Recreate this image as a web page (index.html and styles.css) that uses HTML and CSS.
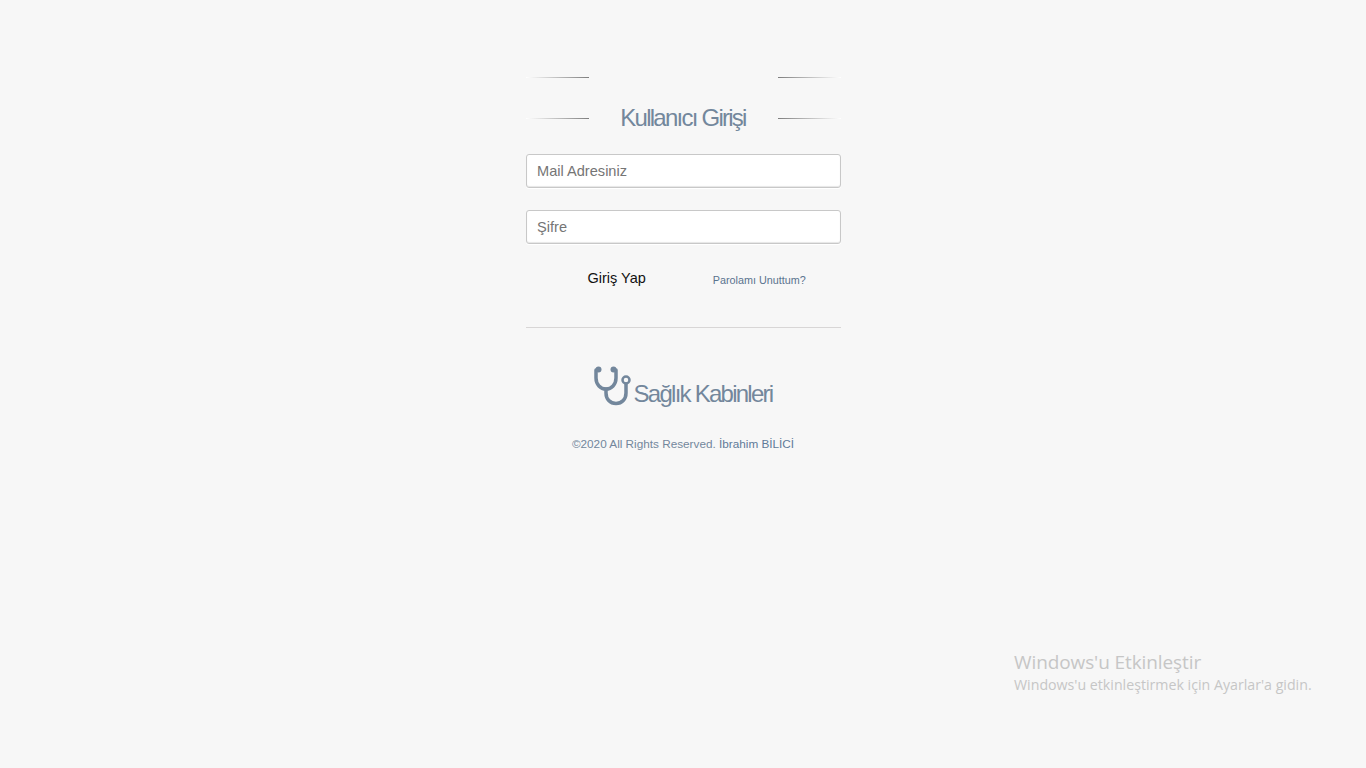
FILE: index.html
```html
<!DOCTYPE html>
<html lang="tr">
<head>
<meta charset="utf-8">
<title>Kullanıcı Girişi</title>
<link rel="stylesheet" href="styles.css">
</head>
<body>
<main class="login">
  <div class="title-row title-row-empty">
    <span class="rule rule-left"></span>
    <span class="rule rule-right"></span>
  </div>
  <div class="title-row">
    <span class="rule rule-left"></span>
    <h1 class="title">Kullanıcı Girişi</h1>
    <span class="rule rule-right"></span>
  </div>
  <form class="form">
    <input class="field" type="text" placeholder="Mail Adresiniz">
    <input class="field" type="password" placeholder="Şifre">
    <div class="actions">
      <a class="submit" href="#">Giriş Yap</a>
      <a class="lost" href="#">Parolamı Unuttum?</a>
    </div>
  </form>
  <div class="separator">
    <div class="brand">
      <svg class="brand-icon" width="38" height="41" viewBox="1 -1 38 41" fill="none" stroke="#73879c" stroke-width="3.500" stroke-linecap="round">
        <path d="M3 4V12C3 18.500 7.500 23 13 23C18.500 23 23 18.500 23 12V4"/>
        <path d="M13 23V27C13 33 17 37.500 23 37.500C29 37.500 33 33 33 27V18"/>
        <circle cx="5.500" cy="3.500" r="3" fill="#73879c" stroke="none"/>
        <circle cx="20.500" cy="3.500" r="3" fill="#73879c" stroke="none"/>
        <circle cx="33" cy="14" r="3.500" stroke-width="2.500"/>
      </svg>
      <span class="brand-name">Sağlık Kabinleri</span>
    </div>
    <p class="copyright">©2020 All Rights Reserved. <a class="author" href="#">İbrahim BİLİCİ</a></p>
  </div>
</main>
<aside class="activation">
  <div class="activation-title">Windows'u Etkinleştir</div>
  <div class="activation-text">Windows'u etkinleştirmek için Ayarlar'a gidin.</div>
</aside>
</body>
</html>
```

FILE: styles.css
```css
* { box-sizing: border-box; }

html, body { height: 100%; }

body {
  margin: 0;
  background: #f7f7f7;
  color: #73879c;
  font-family: "Liberation Sans", Arial, sans-serif;
  overflow: hidden;
  position: relative;
}

.login {
  width: 315px;
  margin: 0 auto;
  padding-top: 62px;
}

.title-row {
  display: flex;
  align-items: center;
  justify-content: space-between;
  height: 30px;
}

.title-row-empty {
  margin-bottom: 11px;
}

.rule {
  display: block;
  width: 63px;
  height: 1px;
  flex: none;
}

.rule-left { background: linear-gradient(to left, #7e7e7e 0%, #fff 100%); }
.rule-right { background: linear-gradient(to right, #7e7e7e 0%, #fff 100%); }

.title {
  margin: 0;
  font-size: 24px;
  font-weight: 400;
  line-height: 30px;
  letter-spacing: -1.75px;
  color: #73879c;
  white-space: nowrap;
}

.form {
  display: flex;
  flex-direction: column;
  margin-top: 21px;
}

.field {
  display: block;
  width: 100%;
  height: 34px;
  margin-bottom: 22px;
  padding: 6px 10.500px;
  border: 1px solid #c8c8c8;
  border-radius: 3px;
  background: #fff;
  box-shadow: inset 0 -1px 1px rgba(0, 0, 0, 0.1), 0 1px 0 #fff;
  font: 14.600px "Liberation Sans", Arial, sans-serif;
  color: #555;
  outline: none;
}

.field::placeholder { color: #757575; opacity: 1; }

.actions {
  display: flex;
  align-items: flex-start;
  height: 61px;
  padding-top: 2px;
  padding-left: 62px;
}

.submit {
  color: #111;
  font-size: 14.500px;
  line-height: 20px;
  text-decoration: none;
}

.lost {
  margin-top: 4px;
  margin-left: 67px;
  color: #5a738e;
  font-size: 10.800px;
  line-height: 16px;
  text-decoration: none;
}

.separator {
  border-top: 1px solid #d8d6d6;
  padding-top: 37px;
  text-align: center;
}

.brand {
  display: flex;
  justify-content: center;
  align-items: flex-end;
  height: 41px;
}

.brand-icon {
  flex: none;
  margin-right: 2px;
}

.brand-name {
  font-size: 24px;
  line-height: 24px;
  letter-spacing: -1.75px;
  color: #73879c;
  white-space: nowrap;
}

.copyright {
  margin: 30px 0 0;
  font-size: 11.750px;
  line-height: 16px;
  color: #73879c;
}

.author {
  color: #5f7a99;
  text-decoration: none;
}

.activation {
  position: absolute;
  left: 1014px;
  top: 649px;
  color: #c6c6c6;
  font-family: "Open Sans", sans-serif;
  white-space: nowrap;
}

.activation-title {
  font-size: 19px;
  line-height: 26px;
  letter-spacing: -0.100px;
}

.activation-text {
  font-size: 14.200px;
  line-height: 19px;
}
```
